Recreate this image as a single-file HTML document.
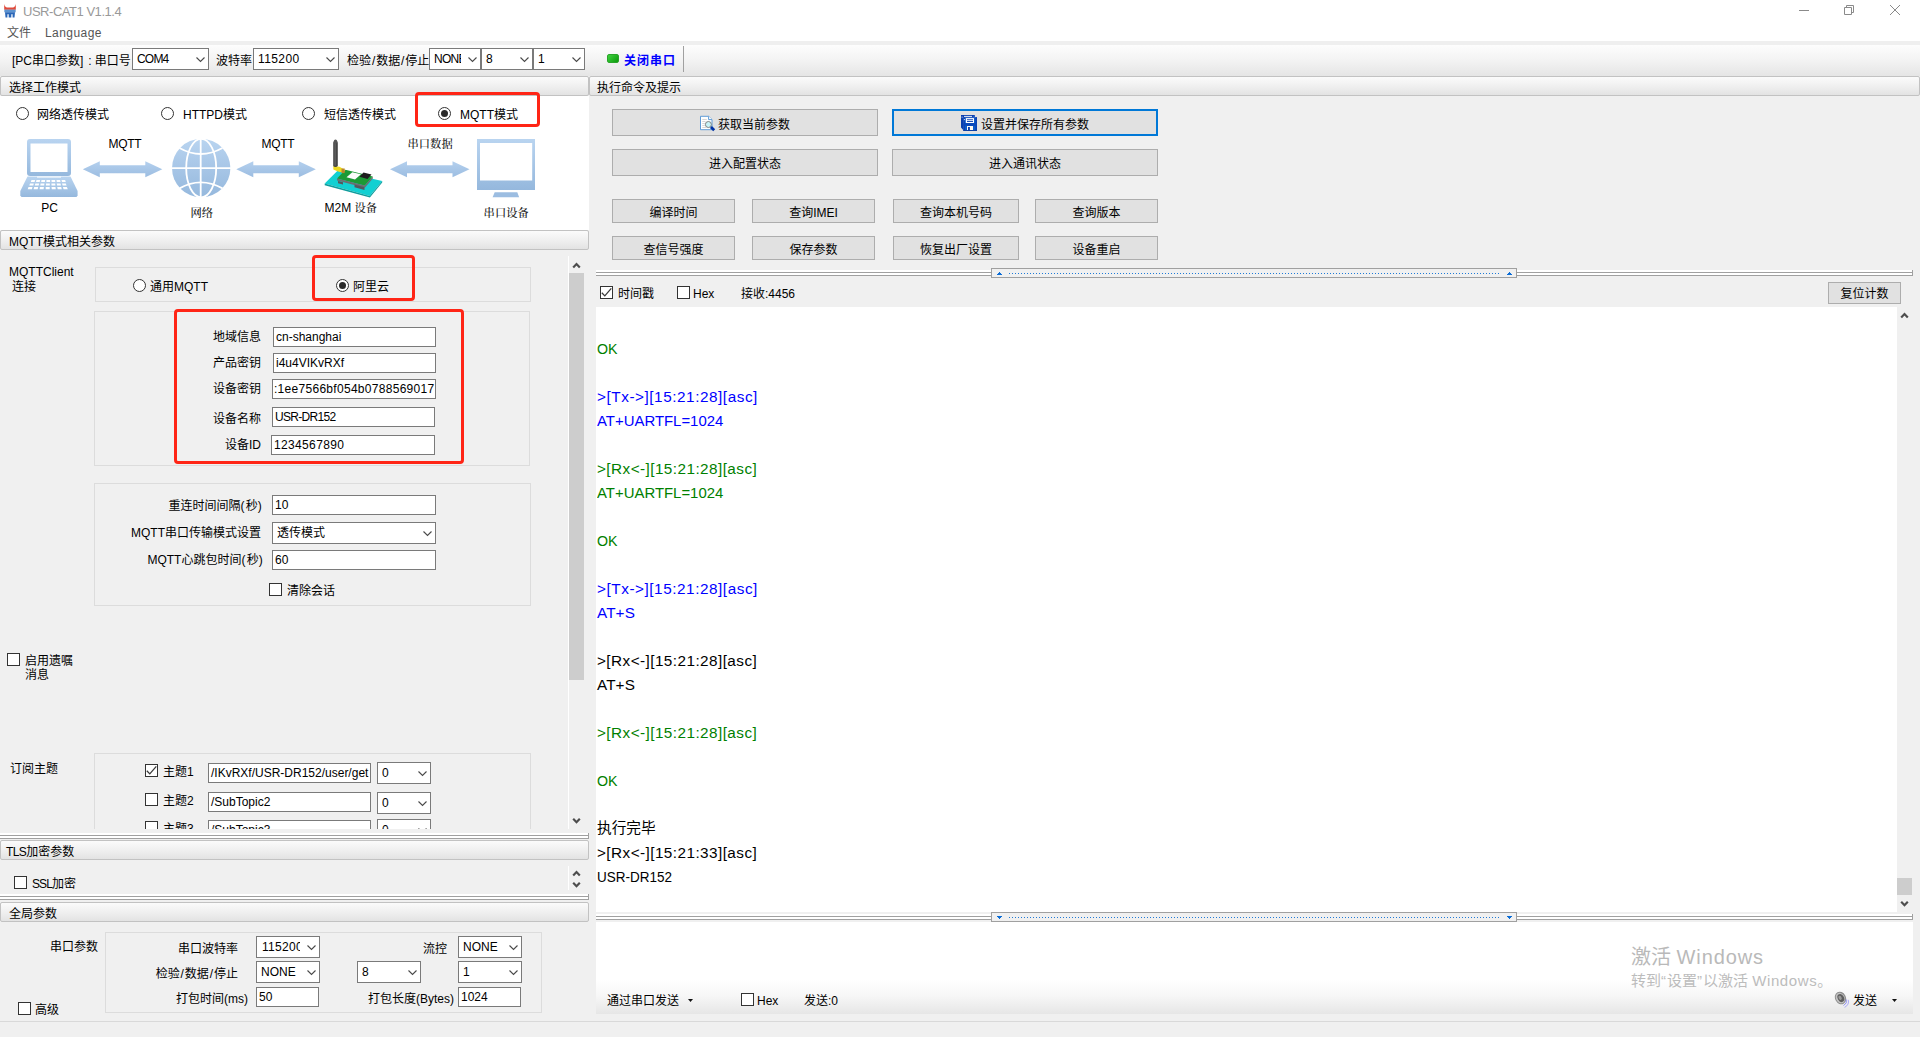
<!DOCTYPE html>
<html lang="zh-CN">
<head>
<meta charset="utf-8">
<title>USR-CAT1 V1.1.4</title>
<style>
html,body{margin:0;padding:0;}
body{width:1920px;height:1037px;background:#f0f0f0;position:relative;overflow:hidden;
  font-family:"Liberation Sans","Noto Sans CJK SC",sans-serif;font-size:12px;color:#000;}
.a{position:absolute;white-space:nowrap;box-sizing:border-box;}
.t{position:absolute;white-space:nowrap;line-height:16px;height:16px;}
.r{text-align:right;}
.hdr{position:absolute;box-sizing:border-box;height:20px;border:1px solid #c2c2c2;border-radius:2px;
  background:linear-gradient(#fbfbfb,#f1f1f1 45%,#e3e3e3);line-height:22px;padding-left:8px;white-space:nowrap;overflow:hidden;}
.cb{position:absolute;box-sizing:border-box;background:#fff;border:1px solid #7a7a7a;white-space:nowrap;overflow:hidden;}
.cb span{position:absolute;left:4px;top:0;right:19px;overflow:hidden;}
.p{letter-spacing:1.3px;}
.s{padding:0 0.9px;}
.cb svg{position:absolute;right:3px;top:50%;margin-top:-2px;}
.tb{position:absolute;box-sizing:border-box;background:#fff;border:1px solid #7a7a7a;white-space:nowrap;overflow:hidden;padding-left:2px;}
.btn{position:absolute;box-sizing:border-box;background:#e1e1e1;border:1px solid #adadad;text-align:center;white-space:nowrap;}
.grp{position:absolute;box-sizing:border-box;border:1px solid #dcdcdc;}
.chk{position:absolute;box-sizing:border-box;width:13px;height:13px;border:1px solid #333;background:#fff;}
.rad{position:absolute;box-sizing:border-box;width:13px;height:13px;border:1px solid #333;border-radius:50%;background:#fff;}
.rad.on::after{content:"";position:absolute;left:2px;top:2px;width:7px;height:7px;border-radius:50%;background:#2a2a2a;}
.red{position:absolute;box-sizing:border-box;border:3px solid #ff2516;border-radius:4px;}
.log{position:absolute;white-space:nowrap;font-size:15.3px;line-height:24px;height:24px;left:597px;margin-top:1px;}
.bl{color:#0000ff;} .gr{color:#008000;}
.spl{position:absolute;height:6px;box-sizing:border-box;border-right:1px solid #a0a0a0;background:linear-gradient(#fff 0,#fff 2px,#a0a0a0 2px,#a0a0a0 3px,#fff 3px,#fff 5px,#a0a0a0 5px,#a0a0a0 6px);}
</style>
</head>
<body>
<div class="a" style="left:0px;top:0px;width:1920px;height:23px;background:#fff;"></div>
<svg class="a" style="left:0px;top:0px;" width="20" height="20" viewBox="0 0 20 20">
  <path d="M4.2 4 C4.7 6.4 5.6 7.4 7.2 7.4 H12.8 C14.4 7.4 15.3 6.4 15.8 4 L15.8 9.7 H4.2 Z" fill="#e04a3a"/>
  <rect x="4.4" y="9.7" width="11.2" height="2.6" fill="#4a86c8"/>
  <rect x="5" y="10.6" width="10" height="0.8" fill="#7fb0e4" opacity=".8"/>
  <path d="M5 12.3 H15 L14.5 17.6 H12.6 V14.3 H11.3 V17.6 H8.7 V14.3 H7.4 V17.6 H5.5 Z" fill="#2a67b8"/>
</svg>
<div class="t" style="left:23px;top:4px;font-size:13px;color:#999;letter-spacing:-0.47px;">USR-CAT1 V1.1.4</div>
<svg class="a" style="left:1790px;top:0;" width="130" height="23" viewBox="0 0 130 23">
  <path d="M9 10.5 H19" stroke="#8a8a8a" stroke-width="1" fill="none"/>
  <path d="M54.5 7.5 H61.5 V14.5 H54.5 Z M56.5 7.5 V5.5 H63.5 V12.5 H61.5" stroke="#8a8a8a" stroke-width="1" fill="none"/>
  <path d="M100 5 L110 15 M110 5 L100 15" stroke="#8a8a8a" stroke-width="1" fill="none"/>
</svg>
<div class="a" style="left:0px;top:23px;width:1920px;height:18px;background:#fff;"></div>
<div class="t" style="left:7px;top:25px;color:#555;">文件</div>
<div class="t" style="left:45px;top:25px;color:#555;letter-spacing:0.45px;">Language</div>
<div class="a" style="left:0px;top:41px;width:1920px;height:35px;background:linear-gradient(#efefef 0,#efefef 4px,#fdfdfd 4px,#f3f3f3 55%,#e5e5e5 100%);"></div>
<div class="t" style="left:12px;top:53px;">[PC串口参数]<span style="letter-spacing:1.5px"> </span>: 串口号</div>
<div class="cb" style="left:132px;top:48px;width:77px;height:22px;line-height:21px;"><span><span style="position:static;letter-spacing:-0.8px">COM4</span></span><svg width="9" height="6" viewBox="0 0 9 6"><path d="M0.5 0.5 L4.5 4.5 L8.5 0.5" fill="none" stroke="#4a4a4a" stroke-width="1.1"/></svg></div>
<div class="t" style="left:216px;top:53px;">波特率</div>
<div class="cb" style="left:253px;top:48px;width:86px;height:22px;line-height:21px;"><span><span style="position:static;letter-spacing:0.4px">115200</span></span><svg width="9" height="6" viewBox="0 0 9 6"><path d="M0.5 0.5 L4.5 4.5 L8.5 0.5" fill="none" stroke="#4a4a4a" stroke-width="1.1"/></svg></div>
<div class="t" style="left:347px;top:53px;">检验<span class="s">/</span>数据<span class="s">/</span>停止</div>
<div class="cb" style="left:429px;top:48px;width:52px;height:22px;line-height:21px;"><span><span style="position:static;letter-spacing:-0.7px">NONE</span></span><svg width="9" height="6" viewBox="0 0 9 6"><path d="M0.5 0.5 L4.5 4.5 L8.5 0.5" fill="none" stroke="#4a4a4a" stroke-width="1.1"/></svg></div>
<div class="cb" style="left:481px;top:48px;width:52px;height:22px;line-height:21px;"><span>8</span><svg width="9" height="6" viewBox="0 0 9 6"><path d="M0.5 0.5 L4.5 4.5 L8.5 0.5" fill="none" stroke="#4a4a4a" stroke-width="1.1"/></svg></div>
<div class="cb" style="left:533px;top:48px;width:52px;height:22px;line-height:21px;"><span>1</span><svg width="9" height="6" viewBox="0 0 9 6"><path d="M0.5 0.5 L4.5 4.5 L8.5 0.5" fill="none" stroke="#4a4a4a" stroke-width="1.1"/></svg></div>
<div class="a" style="left:607px;top:54px;width:12px;height:9px;background:linear-gradient(135deg,#3fd23f,#0c9a0c);border-radius:2px;border:1px solid #2aa52a;"></div>
<div class="t" style="left:624px;top:53px;color:#0000ff;font-weight:bold;letter-spacing:1px;">关闭串口</div>
<div class="a" style="left:683px;top:46px;width:1px;height:26px;background:#a0a0a0;"></div>
<div class="hdr" style="left:0px;top:76px;width:589px;padding-left:8px;">选择工作模式</div>
<div class="hdr" style="left:589px;top:76px;width:1331px;padding-left:7px;">执行命令及提示</div>
<div class="a" style="left:0px;top:96px;width:589px;height:134px;background:#fff;"></div>
<div class="rad" style="left:16px;top:107px;"></div>
<div class="t" style="left:37px;top:107px;">网络透传模式</div>
<div class="rad" style="left:161px;top:107px;"></div>
<div class="t" style="left:183px;top:107px;">HTTPD模式</div>
<div class="rad" style="left:302px;top:107px;"></div>
<div class="t" style="left:324px;top:107px;">短信透传模式</div>
<div class="rad on" style="left:438px;top:107px;"></div>
<div class="t" style="left:460px;top:107px;">MQTT模式</div>
<div class="red" style="left:415px;top:92px;width:125px;height:35px;"></div>
<svg class="a" style="left:0;top:130px;" width="589" height="98" viewBox="0 130 589 98" font-family="'Liberation Sans','Noto Serif CJK SC',sans-serif" font-size="12">
  <defs>
    <linearGradient id="lb" x1="0" y1="0" x2="0" y2="1"><stop offset="0" stop-color="#b9d4f0"/><stop offset="1" stop-color="#95b8dd"/></linearGradient>
    <linearGradient id="ar" x1="0" y1="0" x2="0" y2="1"><stop offset="0" stop-color="#b4d0ee"/><stop offset="1" stop-color="#9cbde1"/></linearGradient>
      </defs>
  <!-- laptop -->
  <rect x="27" y="139" width="44" height="37" rx="3" fill="url(#lb)"/>
  <rect x="30.5" y="143.5" width="37" height="28.5" fill="#fff"/>
  <path d="M27.5 176.5 H70.5 L77.6 191 V195.5 L76.5 197 H21.5 L20.3 195.5 V191 Z" fill="url(#lb)"/>
  <rect x="37" y="176.5" width="24" height="1.2" fill="#fff" opacity=".8"/>
  <g fill="#fff">
    <path d="M31.5 180 h3.6 l-.5 2 h-3.8z M36.5 180 h3.6 l-.4 2 h-3.7z M41.5 180 h3.6 l-.2 2 h-3.7z M46.5 180 h3.6 v2 h-3.7z M51.5 180 h3.6 l.2 2 h-3.7z M56.5 180 h3.6 l.4 2 h-3.7z M61.5 180 h3.6 l.7 2 h-3.8z"/>
    <path d="M30 183.4 h3.8 l-.5 2.1 h-4z M35.3 183.4 h3.8 l-.4 2.1 h-3.9z M40.6 183.4 h3.8 l-.2 2.1 h-3.9z M46 183.4 h3.8 v2.1 h-3.9z M51.4 183.4 h3.8 l.2 2.1 h-3.9z M56.7 183.4 h3.8 l.5 2.1 h-3.9z M62 183.4 h3.8 l.8 2.1 h-4z"/>
    <path d="M28.5 187 h4 l-.6 2.3 h-4.2z M34.2 187 h4 l-.5 2.3 h-4.1z M39.9 187 h4 l-.3 2.3 h-4z M45.7 187 h4 v2.3 h-4z M51.5 187 h4 l.3 2.3 h-4z M57.2 187 h4 l.6 2.3 h-4.1z M62.9 187 h4 l.9 2.3 h-4.2z"/>
  </g>
  <!-- arrows -->
  <path transform="translate(82.8 161.2)" d="M0 8 L17 0 V4 H62.5 V0 L79.5 8 L62.5 16 V12 H17 V16 Z" fill="url(#ar)"/>
  <path transform="translate(236.3 161.2)" d="M0 8 L17 0 V4 H62.5 V0 L79.5 8 L62.5 16 V12 H17 V16 Z" fill="url(#ar)"/>
  <path transform="translate(390 161.2)" d="M0 8 L17 0 V4 H62.5 V0 L79.5 8 L62.5 16 V12 H17 V16 Z" fill="url(#ar)"/>
  <!-- globe -->
  <circle cx="201.2" cy="168.1" r="29.2" fill="url(#lb)"/>
  <g fill="none" stroke="#fff" stroke-width="1.8">
    <path d="M200.7 138 V198.5"/>
    <path d="M171 168.1 H231.5"/>
    <ellipse cx="201.2" cy="168.1" rx="15" ry="29.2"/>
    <path d="M179.5 148 Q200.7 160 222.5 148"/>
    <path d="M179.5 188.4 Q200.7 176.4 222.5 188.4"/>
  </g>
  <!-- M2M device -->
  <path d="M324.7 183.6 L337.5 170.8 L382.2 181 L369.7 196 Z" fill="#12d0d2"/>
  <path d="M324.7 183.6 L369.7 196 L382.2 181 L382.2 182.5 L369.9 197.6 L324.7 185.2 Z" fill="#0f9c9c"/>
  <path d="M337 178.5 L345.5 169.8 L372.8 176.4 L364.8 185.6 Z" fill="#1c9a35"/>
  <path d="M337 178.5 L364.8 185.6 L372.8 176.4 V178.4 L364.8 187.8 L337 180.6 Z" fill="#6c6f72"/>
  <path d="M346.5 177.2 L352.3 172.2 L361 174.2 L355 179.6 Z" fill="#fbfbfb"/>
  <path d="M359.5 176.8 L363.5 172.6 L371.5 174.6 L367.5 179 Z" fill="#1d1d1d"/>
  <path d="M354.5 184.5 L364.5 187.2 V190 L354.5 187.3 Z" fill="#55585c"/>
  <path d="M338 180.9 L343 182.2 V184.6 L338 183.3 Z" fill="#55585c"/>
  <path d="M333.3 166 L339.5 166.8 L345 170 L343.8 172.8 L338 171.6 L333.3 169.5 Z" fill="#ecd820"/>
  <rect x="341.5" y="168.5" width="3.2" height="4.6" fill="#b9862c"/>
  <rect x="333.2" y="141" width="4.6" height="26" rx="1.8" fill="#454545"/><rect x="334.6" y="141.5" width="1" height="24" fill="#6a6a6a"/>
  <rect x="333.8" y="139.6" width="3.4" height="4" rx="1.7" fill="#555"/>
  <!-- monitor -->
  <rect x="477" y="139" width="58" height="51" fill="url(#lb)"/>
  <rect x="480" y="143" width="52.2" height="37.5" fill="#fff"/>
  <path d="M494.7 192.2 H517.3 L519.2 197.2 H492.6 Z" fill="#9cbde1"/>
  <!-- labels -->
  <text x="108.6" y="147.5" letter-spacing="-0.3">MQTT</text>
  <text x="261.6" y="147.5" letter-spacing="-0.3">MQTT</text>
  <text x="407.5" y="147.8" font-family="'Noto Serif CJK SC',serif" font-size="11.3" fill="#111" font-weight="500">串口数据</text>
  <text x="41.3" y="212.2">PC</text>
  <text x="190.5" y="216.8" font-family="'Noto Serif CJK SC',serif" font-size="11.3" fill="#111" font-weight="500">网络</text>
  <text x="324.5" y="212.2">M2M <tspan font-family="'Noto Serif CJK SC',serif" font-size="11.3" fill="#111" font-weight="500">设备</tspan></text>
  <text x="483.6" y="216.8" font-family="'Noto Serif CJK SC',serif" font-size="11.3" fill="#111" font-weight="500">串口设备</text>
</svg>
<div class="hdr" style="left:0px;top:230px;width:589px;padding-left:8px;">MQTT模式相关参数</div>
<div class="t" style="left:9px;top:264px;">MQTTClient</div>
<div class="t" style="left:12px;top:279px;">连接</div>
<div class="grp" style="left:95px;top:267px;width:436px;height:35px;"></div>
<div class="rad" style="left:133px;top:279px;"></div>
<div class="t" style="left:150px;top:279px;">通用MQTT</div>
<div class="rad on" style="left:336px;top:279px;"></div>
<div class="t" style="left:353px;top:279px;">阿里云</div>
<div class="red" style="left:312px;top:255px;width:103px;height:46px;"></div>
<div class="grp" style="left:94px;top:311px;width:436px;height:155px;"></div>
<div class="red" style="left:174px;top:309px;width:290px;height:155px;"></div>
<div class="t r" style="right:1659px;top:329px;">地域信息</div>
<div class="tb" style="left:273px;top:327px;width:163px;height:20px;line-height:19px;">cn-shanghai</div>
<div class="t r" style="right:1659px;top:355px;">产品密钥</div>
<div class="tb" style="left:273px;top:353px;width:163px;height:20px;line-height:19px;">i4u4VIKvRXf</div>
<div class="t r" style="right:1659px;top:381px;">设备密钥</div>
<div class="tb" style="left:272px;top:379px;width:164px;height:20px;line-height:19px;padding-left:1px;letter-spacing:0.29px;">:1ee7566bf054b0788569017</div>
<div class="t r" style="right:1659px;top:411px;">设备名称</div>
<div class="tb" style="left:272px;top:407px;width:163px;height:20px;line-height:19px;letter-spacing:-0.7px;">USR-DR152</div>
<div class="t r" style="right:1659px;top:437px;">设备ID</div>
<div class="tb" style="left:271px;top:435px;width:164px;height:20px;line-height:19px;letter-spacing:0.35px;">1234567890</div>
<div class="grp" style="left:94px;top:483px;width:437px;height:123px;"></div>
<div class="t r" style="right:1657px;top:498px;">重连时间间隔<span class="p">(</span>秒<span class="p">)</span></div>
<div class="tb" style="left:272px;top:495px;width:164px;height:20px;line-height:19px;">10</div>
<div class="t r" style="right:1659px;top:525px;">MQTT串口传输模式设置</div>
<div class="cb" style="left:272px;top:522px;width:164px;height:22px;line-height:21px;"><span>透传模式</span><svg width="9" height="6" viewBox="0 0 9 6"><path d="M0.5 0.5 L4.5 4.5 L8.5 0.5" fill="none" stroke="#4a4a4a" stroke-width="1.1"/></svg></div>
<div class="t r" style="right:1656px;top:552px;">MQTT心跳包时间<span class="p">(</span>秒<span class="p">)</span></div>
<div class="tb" style="left:272px;top:550px;width:164px;height:20px;line-height:19px;">60</div>
<div class="chk" style="left:269px;top:583px;"></div>
<div class="t" style="left:287px;top:583px;">清除会话</div>
<div class="chk" style="left:7px;top:653px;"></div>
<div class="t" style="left:25px;top:653px;">启用遗嘱</div>
<div class="t" style="left:25px;top:667px;">消息</div>
<div class="t" style="left:10px;top:761px;">订阅主题</div>
<div class="a" style="left:0;top:753px;width:560px;height:76px;overflow:hidden;">
<div class="grp" style="left:94px;top:0px;width:437px;height:200px;"></div>
<div class="chk" style="left:145px;top:11px;"><svg class="a" style="left:0;top:0" width="11" height="11" viewBox="0 0 11 11"><path d="M0.8 5.8 L3.8 8.9 L10.3 1.4" fill="none" stroke="#3a3a3a" stroke-width="1.3"/></svg></div>
<div class="t" style="left:163px;top:11px;">主题1</div>
<div class="tb" style="left:208px;top:10px;width:163px;height:20px;line-height:19px;">/IKvRXf/USR-DR152/user/get</div>
<div class="cb" style="left:377px;top:9px;width:54px;height:22px;line-height:21px;"><span>0</span><svg width="9" height="6" viewBox="0 0 9 6"><path d="M0.5 0.5 L4.5 4.5 L8.5 0.5" fill="none" stroke="#4a4a4a" stroke-width="1.1"/></svg></div>
<div class="chk" style="left:145px;top:40px;"></div>
<div class="t" style="left:163px;top:40px;">主题2</div>
<div class="tb" style="left:208px;top:39px;width:163px;height:20px;line-height:19px;">/SubTopic2</div>
<div class="cb" style="left:377px;top:39px;width:54px;height:22px;line-height:21px;"><span>0</span><svg width="9" height="6" viewBox="0 0 9 6"><path d="M0.5 0.5 L4.5 4.5 L8.5 0.5" fill="none" stroke="#4a4a4a" stroke-width="1.1"/></svg></div>
<div class="chk" style="left:145px;top:68px;"></div>
<div class="t" style="left:163px;top:68px;">主题3</div>
<div class="tb" style="left:208px;top:67px;width:163px;height:20px;line-height:19px;">/SubTopic3</div>
<div class="cb" style="left:377px;top:66px;width:54px;height:22px;line-height:21px;"><span>0</span><svg width="9" height="6" viewBox="0 0 9 6"><path d="M0.5 0.5 L4.5 4.5 L8.5 0.5" fill="none" stroke="#4a4a4a" stroke-width="1.1"/></svg></div>
</div>
<div class="a" style="left:568px;top:256px;width:1px;height:573px;background:#fff;"></div>
<div class="a" style="left:569px;top:273px;width:15px;height:407px;background:#cdcdcd;"></div>
<svg class="a" style="left:572px;top:262px;" width="9" height="7" viewBox="0 0 9 7"><path d="M1.2 5.4 L4.5 2 L7.8 5.4" fill="none" stroke="#4d4d4d" stroke-width="2.2"/></svg>
<svg class="a" style="left:572px;top:818px;" width="9" height="7" viewBox="0 0 9 7"><path d="M1.2 0.8 L4.5 4.2 L7.8 0.8" fill="none" stroke="#4d4d4d" stroke-width="2.2"/></svg>
<div class="spl" style="left:0;top:833px;width:589px;border-right:1px solid #a0a0a0;box-sizing:border-box;"></div>
<div class="hdr" style="left:0px;top:840px;width:589px;padding-left:5px;"><span style="letter-spacing:-0.6px">TLS</span>加密参数</div>
<div class="chk" style="left:14px;top:876px;"></div>
<div class="t" style="left:32px;top:876px;"><span style="letter-spacing:-0.9px">SSL</span>加密</div>
<svg class="a" style="left:572px;top:870px;" width="9" height="7" viewBox="0 0 9 7"><path d="M1.2 5.4 L4.5 2 L7.8 5.4" fill="none" stroke="#4d4d4d" stroke-width="2.2"/></svg>
<svg class="a" style="left:572px;top:882px;" width="9" height="7" viewBox="0 0 9 7"><path d="M1.2 0.8 L4.5 4.2 L7.8 0.8" fill="none" stroke="#4d4d4d" stroke-width="2.2"/></svg>
<div class="a" style="left:568px;top:866px;width:1px;height:24px;background:#fff;"></div>
<div class="spl" style="left:0;top:894px;width:589px;border-right:1px solid #a0a0a0;box-sizing:border-box;"></div>
<div class="hdr" style="left:0px;top:902px;width:589px;padding-left:8px;">全局参数</div>
<div class="t" style="left:50px;top:939px;">串口参数</div>
<div class="grp" style="left:105px;top:932px;width:437px;height:81px;"></div>
<div class="t r" style="right:1682px;top:941px;">串口波特率</div>
<div class="cb" style="left:256px;top:936px;width:64px;height:22px;line-height:21px;"><span><span style="position:static;letter-spacing:0.3px;padding-left:1px">115200</span></span><svg width="9" height="6" viewBox="0 0 9 6"><path d="M0.5 0.5 L4.5 4.5 L8.5 0.5" fill="none" stroke="#4a4a4a" stroke-width="1.1"/></svg></div>
<div class="t r" style="right:1473px;top:941px;">流控</div>
<div class="cb" style="left:458px;top:936px;width:64px;height:22px;line-height:21px;"><span>NONE</span><svg width="9" height="6" viewBox="0 0 9 6"><path d="M0.5 0.5 L4.5 4.5 L8.5 0.5" fill="none" stroke="#4a4a4a" stroke-width="1.1"/></svg></div>
<div class="t r" style="right:1682px;top:966px;">检验<span class="s">/</span>数据<span class="s">/</span>停止</div>
<div class="cb" style="left:256px;top:961px;width:64px;height:22px;line-height:21px;"><span>NONE</span><svg width="9" height="6" viewBox="0 0 9 6"><path d="M0.5 0.5 L4.5 4.5 L8.5 0.5" fill="none" stroke="#4a4a4a" stroke-width="1.1"/></svg></div>
<div class="cb" style="left:357px;top:961px;width:64px;height:22px;line-height:21px;"><span>8</span><svg width="9" height="6" viewBox="0 0 9 6"><path d="M0.5 0.5 L4.5 4.5 L8.5 0.5" fill="none" stroke="#4a4a4a" stroke-width="1.1"/></svg></div>
<div class="cb" style="left:458px;top:961px;width:64px;height:22px;line-height:21px;"><span>1</span><svg width="9" height="6" viewBox="0 0 9 6"><path d="M0.5 0.5 L4.5 4.5 L8.5 0.5" fill="none" stroke="#4a4a4a" stroke-width="1.1"/></svg></div>
<div class="t r" style="right:1672px;top:991px;">打包时间(ms)</div>
<div class="tb" style="left:256px;top:987px;width:63px;height:20px;line-height:19px;">50</div>
<div class="t r" style="right:1466px;top:991px;">打包长度(Bytes)</div>
<div class="tb" style="left:458px;top:987px;width:63px;height:20px;line-height:19px;">1024</div>
<div class="chk" style="left:18px;top:1002px;"></div>
<div class="t" style="left:35px;top:1002px;">高级</div>
<div class="a" style="left:0px;top:1021px;width:1920px;height:1px;background:#d9d9d9;"></div>
<div class="btn" style="left:612px;top:109px;width:266px;height:27px;line-height:25px;"><span style="position:relative;top:2px"></span></div>
<div class="btn" style="left:892px;top:109px;width:266px;height:27px;line-height:25px;border:2px solid #0078d7;"><span style="position:relative;top:2px"></span></div>
<div class="t" style="left:718px;top:117px;">获取当前参数</div>
<div class="t" style="left:981px;top:117px;">设置并保存所有参数</div>
<svg class="a" style="left:698px;top:114px;" width="19" height="19" viewBox="698 114 19 19">
  <path d="M700.5 116.3 H708.6 L712 119.6 V129.7 H700.5 Z" fill="#fff" stroke="#5f9bd6" stroke-width="1"/>
  <path d="M708.6 116.3 V119.6 H712" fill="#fff" stroke="#5f9bd6" stroke-width="1"/>
  <path d="M702.3 119.5 H706.8 M702.3 121.5 H705.5 M702.3 123.5 H704.8 M702.3 125.5 H704.8 M702.3 127.5 H706" stroke="#d2d2d2" stroke-width="0.9" fill="none"/>
  <circle cx="708.4" cy="124.5" r="3" fill="#c8f3f7" stroke="#747474" stroke-width="0.9"/>
  <path d="M710.9 126.9 L714.2 130.2" stroke="#0032a4" stroke-width="2.8" stroke-linecap="butt"/>
</svg>
<svg class="a" style="left:960px;top:114px;" width="18" height="18" viewBox="960 114 18 18">
  <path d="M961 115 H974.8 V117.2 H963.4 V130.2 L961 127.6 Z" fill="#0a3fae"/>
  <rect x="964" y="115.9" width="8" height="0.9" fill="#fff"/>
  <rect x="961.6" y="116.6" width="1" height="1" fill="#dfe8fa"/><rect x="973.2" y="115.8" width="0.9" height="0.9" fill="#2f6fd8"/>
  <rect x="963.4" y="117.2" width="13.5" height="13.6" fill="#0c4cc0"/>
  <rect x="964.6" y="118.2" width="11" height="12.6" fill="#0d5bcb"/>
  <rect x="963.4" y="117.2" width="1.3" height="13.6" fill="#0a3fae"/><rect x="975.6" y="117.2" width="1.3" height="13.6" fill="#0a3fae"/>
  <rect x="963.4" y="123.2" width="13.5" height="2.6" fill="#0b47b9"/>
  <rect x="965.8" y="118.1" width="8.2" height="4.9" fill="#fff"/>
  <rect x="967" y="119.3" width="6" height="0.9" fill="#0a3fae"/><rect x="967" y="121.1" width="6" height="0.9" fill="#0a3fae"/>
  <rect x="963.9" y="119.1" width="1" height="1" fill="#dfe8fa"/>
  <rect x="967" y="126" width="6" height="4" fill="#fffaf0"/>
  <rect x="968" y="127" width="1.9" height="3.8" fill="#0a3fae"/>
  <rect x="963.4" y="130.2" width="13.5" height="0.7" fill="#08369a"/>
</svg>
<div class="btn" style="left:612px;top:149px;width:266px;height:27px;line-height:25px;"><span style="position:relative;top:2px">进入配置状态</span></div>
<div class="btn" style="left:892px;top:149px;width:266px;height:27px;line-height:25px;"><span style="position:relative;top:2px">进入通讯状态</span></div>
<div class="btn" style="left:612px;top:199px;width:123px;height:24px;line-height:22px;"><span style="position:relative;top:2px">编译时间</span></div>
<div class="btn" style="left:752px;top:199px;width:123px;height:24px;line-height:22px;"><span style="position:relative;top:2px">查询IMEI</span></div>
<div class="btn" style="left:893px;top:199px;width:126px;height:24px;line-height:22px;"><span style="position:relative;top:2px">查询本机号码</span></div>
<div class="btn" style="left:1035px;top:199px;width:123px;height:24px;line-height:22px;"><span style="position:relative;top:2px">查询版本</span></div>
<div class="btn" style="left:612px;top:236px;width:123px;height:24px;line-height:22px;"><span style="position:relative;top:2px">查信号强度</span></div>
<div class="btn" style="left:752px;top:236px;width:123px;height:24px;line-height:22px;"><span style="position:relative;top:2px">保存参数</span></div>
<div class="btn" style="left:893px;top:236px;width:126px;height:24px;line-height:22px;"><span style="position:relative;top:2px">恢复出厂设置</span></div>
<div class="btn" style="left:1035px;top:236px;width:123px;height:24px;line-height:22px;"><span style="position:relative;top:2px">设备重启</span></div>
<div class="spl" style="left:596px;top:270px;width:1317px;"></div>
<div class="a" style="left:991px;top:268px;width:526px;height:10px;border:1px solid #a0a0a0;background:#f0f0f0;"></div>
<div class="a" style="left:1009px;top:273px;width:490px;height:1px;background:repeating-linear-gradient(90deg,#1f7ad6 0,#1f7ad6 1px,transparent 1px,transparent 3px);"></div>
<svg class="a" style="left:997px;top:272px;" width="5" height="3" viewBox="0 0 5 3" shape-rendering="crispEdges"><path d="M2 0 H3 V1 H4 V2 H5 V3 H0 V2 H1 V1 H2 Z" fill="#0a6cd6"/></svg>
<svg class="a" style="left:1507px;top:272px;" width="5" height="3" viewBox="0 0 5 3" shape-rendering="crispEdges"><path d="M2 0 H3 V1 H4 V2 H5 V3 H0 V2 H1 V1 H2 Z" fill="#0a6cd6"/></svg>
<div class="chk" style="left:600px;top:286px;"><svg class="a" style="left:0;top:0" width="11" height="11" viewBox="0 0 11 11"><path d="M0.8 5.8 L3.8 8.9 L10.3 1.4" fill="none" stroke="#3a3a3a" stroke-width="1.3"/></svg></div>
<div class="t" style="left:618px;top:286px;">时间戳</div>
<div class="chk" style="left:677px;top:286px;"></div>
<div class="t" style="left:693px;top:286px;">Hex</div>
<div class="t" style="left:741px;top:286px;">接收:4456</div>
<div class="btn" style="left:1828px;top:282px;width:73px;height:22px;line-height:20px;"><span style="position:relative;top:1px">复位计数</span></div>
<div class="a" style="left:596px;top:307px;width:1301px;height:605px;background:#fff;"></div>
<div class="a" style="left:1897px;top:307px;width:16px;height:605px;background:#f0f0f0;"></div>
<div class="a" style="left:1897px;top:878px;width:15px;height:17px;background:#cdcdcd;"></div>
<svg class="a" style="left:1900px;top:312px;" width="9" height="7" viewBox="0 0 9 7"><path d="M1.2 5.4 L4.5 2 L7.8 5.4" fill="none" stroke="#4d4d4d" stroke-width="2.2"/></svg>
<svg class="a" style="left:1900px;top:901px;" width="9" height="7" viewBox="0 0 9 7"><path d="M1.2 0.8 L4.5 4.2 L7.8 0.8" fill="none" stroke="#4d4d4d" stroke-width="2.2"/></svg>
<div class="log gr" style="top:336px;transform:scaleX(0.928);transform-origin:0 0;">OK</div>
<div class="log bl" style="top:384px;letter-spacing:0.55px;">&gt;[Tx-&gt;][15:21:28][asc]</div>
<div class="log bl" style="top:408px;transform:scaleX(0.975);transform-origin:0 0;">AT+UARTFL=1024</div>
<div class="log gr" style="top:456px;letter-spacing:0.44px;">&gt;[Rx&lt;-][15:21:28][asc]</div>
<div class="log gr" style="top:480px;transform:scaleX(0.975);transform-origin:0 0;">AT+UARTFL=1024</div>
<div class="log gr" style="top:528px;transform:scaleX(0.928);transform-origin:0 0;">OK</div>
<div class="log bl" style="top:576px;letter-spacing:0.55px;">&gt;[Tx-&gt;][15:21:28][asc]</div>
<div class="log bl" style="top:600px;letter-spacing:0.1px;">AT+S</div>
<div class="log " style="top:648px;letter-spacing:0.44px;">&gt;[Rx&lt;-][15:21:28][asc]</div>
<div class="log " style="top:672px;letter-spacing:0.1px;">AT+S</div>
<div class="log gr" style="top:720px;letter-spacing:0.44px;">&gt;[Rx&lt;-][15:21:28][asc]</div>
<div class="log gr" style="top:768px;transform:scaleX(0.928);transform-origin:0 0;">OK</div>
<div class="log " style="top:816px;font-size:14.67px;margin-top:0;">执行完毕</div>
<div class="log " style="top:840px;letter-spacing:0.44px;">&gt;[Rx&lt;-][15:21:33][asc]</div>
<div class="log " style="top:864px;transform:scaleX(0.882);transform-origin:0 0;">USR-DR152</div>
<div class="a" style="left:596px;top:912px;width:1317px;height:10px;background:#f0f0f0;"></div>
<div class="a" style="left:596px;top:922px;width:1317px;height:92px;background:linear-gradient(#fff 0,#fff 62%,#f7f7f7 80%,#e6e6e6 100%);"></div>
<div class="spl" style="left:596px;top:914px;width:1317px;"></div>
<div class="a" style="left:991px;top:912px;width:526px;height:10px;border:1px solid #a0a0a0;background:#f0f0f0;"></div>
<div class="a" style="left:1009px;top:917px;width:490px;height:1px;background:repeating-linear-gradient(90deg,#1f7ad6 0,#1f7ad6 1px,transparent 1px,transparent 3px);"></div>
<svg class="a" style="left:997px;top:916px;" width="5" height="3" viewBox="0 0 5 3" shape-rendering="crispEdges"><path d="M0 0 H5 V1 H4 V2 H3 V3 H2 V2 H1 V1 H0 Z" fill="#0a6cd6"/></svg>
<svg class="a" style="left:1507px;top:916px;" width="5" height="3" viewBox="0 0 5 3" shape-rendering="crispEdges"><path d="M0 0 H5 V1 H4 V2 H3 V3 H2 V2 H1 V1 H0 Z" fill="#0a6cd6"/></svg>
<div class="t" style="left:607px;top:993px;">通过串口发送</div>
<svg class="a" style="left:688px;top:999px;" width="5" height="3" viewBox="0 0 5 3"><path d="M0 0 H5 L2.5 3 Z" fill="#111"/></svg>
<div class="chk" style="left:741px;top:993px;"></div>
<div class="t" style="left:757px;top:993px;">Hex</div>
<div class="t" style="left:804px;top:993px;">发送:0</div>
<div class="t" style="left:1631px;top:944px;height:26px;line-height:26px;font-size:20px;color:#b9b9b9;">激活 <span style="letter-spacing:0.9px">Windows</span></div>
<div class="t" style="left:1631px;top:971px;height:20px;line-height:20px;font-size:15px;color:#bcbcbc;">转到<span style="letter-spacing:1px">“</span>设置<span style="letter-spacing:1px">”</span>以激活 <span style="letter-spacing:0.6px">Windows</span>。</div>
<svg class="a" style="left:1833px;top:990px;" width="19" height="19" viewBox="0 0 19 19">
  <g transform="rotate(-28 7.5 8)">
    <ellipse cx="7.5" cy="8" rx="5.4" ry="6.6" fill="#8f8f8f"/>
    <ellipse cx="7.3" cy="8" rx="4.3" ry="5.5" fill="#c4c4c4"/>
    <ellipse cx="7.8" cy="8.2" rx="3.1" ry="4.2" fill="#5e5e5e"/>
    <ellipse cx="7.2" cy="7.6" rx="1.5" ry="2.2" fill="#9a9a9a"/>
  </g>
  <path d="M13.2 9.5 Q14.6 13.2 10.6 15.6" fill="none" stroke="#8c8cf2" stroke-width="1"/>
  <path d="M15.2 9.8 Q16.6 14.6 11.6 17.4" fill="none" stroke="#a9a9f6" stroke-width="1"/>
</svg>
<div class="t" style="left:1853px;top:993px;">发送</div>
<svg class="a" style="left:1892px;top:999px;" width="5" height="3" viewBox="0 0 5 3"><path d="M0 0 H5 L2.5 3 Z" fill="#111"/></svg>
</body>
</html>
